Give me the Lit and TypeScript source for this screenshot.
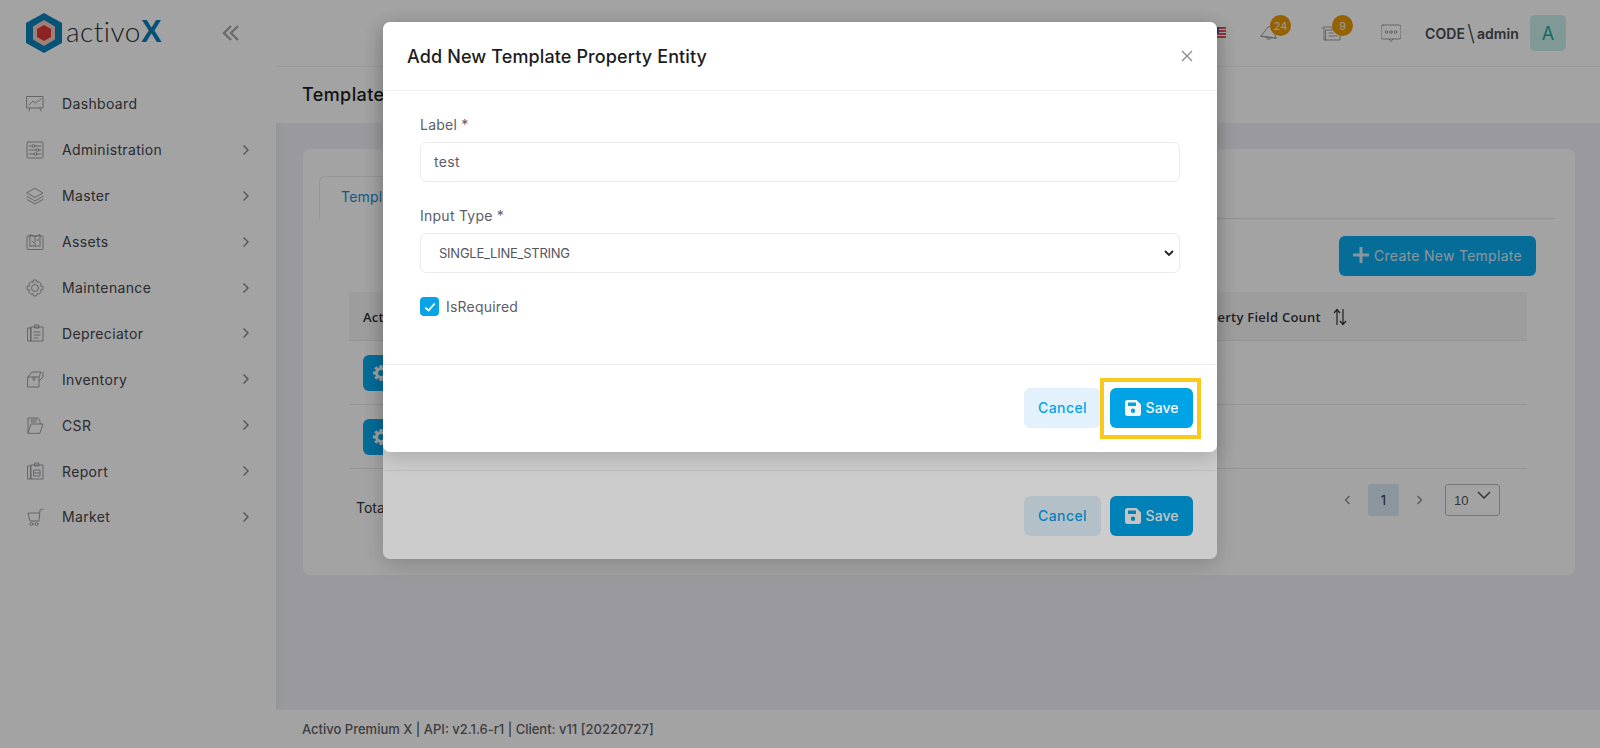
import { LitElement, html, css, svg } from "lit";
import { customElement } from "lit/decorators.js";

const line = (body: unknown, size = 20) => html`<svg class="ico" width=${size} height=${size} viewBox="0 0 20 20" fill="none" stroke="currentColor" stroke-width="0.9" stroke-linejoin="round" stroke-linecap="round">${body}</svg>`;

const MENU = [
  { name: "Dashboard", arrow: false, icon: svg`<rect x="2" y="2.500" width="16" height="11.500"/><path d="M4 11l4-4 2.500 2L16 5M5 14l-1 3M15 14l1 3"/>` },
  { name: "Administration", arrow: true, icon: svg`<rect x="2" y="2" width="16" height="16" rx="1"/><path d="M4 6h3M10 6h6M4 10h7M14 10h2M4 14h5M12 14h4"/><circle cx="8.500" cy="6" r="1.400"/><circle cx="12.500" cy="10" r="1.400"/><circle cx="10.500" cy="14" r="1.400"/>` },
  { name: "Master", arrow: true, icon: svg`<path d="M10 2.500L18 7l-8 4.500L2 7zM2 10.500l8 4.500 8-4.500M2 13.500l8 4.500 8-4.500"/>` },
  { name: "Assets", arrow: true, icon: svg`<rect x="2" y="4" width="16" height="13.500" rx="1"/><path d="M5 14V2.500l5 2 5-2V14M10 4.500V14M5 14h10M7 9l2 2M12 8h2"/>` },
  { name: "Maintenance", arrow: true, icon: svg`<circle cx="10" cy="10" r="3.500"/><path d="M8.500 2h3l.5 2.500 2-.8 2.200 2.100-1 2 2.800.7v3l-2.800.7 1 2-2.200 2.100-2-.8-.5 2.500h-3l-.5-2.500-2 .8-2.200-2.100 1-2L2 11.500v-3l2.800-.7-1-2L6 3.700l2 .8z"/>` },
  { name: "Depreciator", arrow: true, icon: svg`<path d="M3 5h3v13H3zM6 4h12v14H6zM10 2h4v3h-4zM9 9h6M9 12h6M9 15h4"/>` },
  { name: "Inventory", arrow: true, icon: svg`<path d="M3 8h11v10H3zM3 8l4-5h9l-2 5M14 12l4-4V3M8 8v3h2V8"/>` },
  { name: "CSR", arrow: true, icon: svg`<path d="M3 18V3h10l2 3v3M6 5h6M6 7h5M3 18l3-9h12l-3 9z"/>` },
  { name: "Report", arrow: true, icon: svg`<path d="M3 5h3v13H3zM6 4h12v14H6zM10 2h4v3h-4zM9 9h6v6H9zM9 12h6"/>` },
  { name: "Market", arrow: true, icon: svg`<path d="M18 2l-3 1-1 11H5L3 6h11"/><circle cx="6.500" cy="17" r="1.500"/><circle cx="11.500" cy="17" r="1.500"/>` },
];

const saveIcon = html`<svg class="save-ico" width="16" height="16" viewBox="0 0 16 16"><path fill="currentColor" fill-rule="evenodd" d="M2.500 0h9L16 4.500v9a2.500 2.500 0 0 1-2.500 2.500h-11A2.500 2.500 0 0 1 0 13.500v-11A2.500 2.500 0 0 1 2.500 0zM3 2.500v3.500h8V2.500zM8 8.500a2.200 2.200 0 1 0 0 4.400 2.200 2.200 0 0 0 0-4.400z"/></svg>`;

const footerButtons = html`
  <button class="btn cancel">Cancel</button>
  <button class="btn save">${saveIcon}Save</button>
`;

const gear = html`<svg class="gear" width="18" height="18" viewBox="0 0 18 18"><circle cx="9" cy="9" r="4.500" fill="none" stroke="currentColor" stroke-width="3"/><path stroke="currentColor" stroke-width="3" d="M9 1v3M9 14v3M1 9h3M14 9h3M3.300 3.300l2 2M12.700 12.700l2 2M14.700 3.300l-2 2M5.300 12.700l-2 2"/></svg>`;

@customElement("app-root")
export class AppRoot extends LitElement {
  static styles = css`
    :host {
      display: block;
      position: relative;
      width: 1600px;
      height: 748px;
      overflow: hidden;
      font-family: Inter, "Open Sans", sans-serif;
      color: #33333b;
    }
    .shell {
      display: grid;
      grid-template-columns: 276px 1fr;
      height: 748px;
      background: #f0f1f9;
    }
    .sidebar {
      background: #fff;
      box-shadow: 2px 0 8px rgba(0, 0, 0, 0.04);
      padding-top: 13px;
    }
    .logo {
      display: flex;
      align-items: center;
      height: 40px;
      padding: 0 35px 0 26px;
    }
    .logo-text {
      margin: -4px 0 0 4px;
      font-family: Lato, sans-serif;
      font-size: 28px;
      line-height: 32px;
      font-weight: 300;
      letter-spacing: 0.5px;
      color: #33333b;
    }
    .logo-x {
      font-family: "Liberation Sans", sans-serif;
      font-weight: 700;
      font-size: 31px;
      color: #0a7db4;
    }
    .collapse {
      margin-left: auto;
      color: #a9a9ab;
    }
    .menu {
      margin-top: 28px;
    }
    .item {
      display: flex;
      align-items: center;
      height: 45.900px;
      padding-left: 25px;
      font-size: 14px;
      letter-spacing: 0.35px;
      color: #45454c;
    }
    .ico {
      flex: none;
      color: #96969a;
    }
    .item span {
      margin-left: 17px;
      flex: 1;
    }
    .chev {
      margin-right: 26px;
      color: #85858a;
    }
    .main {
      display: flex;
      flex-direction: column;
      min-width: 0;
    }
    .topbar {
      height: 67px;
      flex: none;
      box-sizing: border-box;
      background: #fff;
      border-bottom: 1px solid #f0f0f0;
      display: flex;
      align-items: center;
      justify-content: flex-end;
      padding-right: 34px;
    }
    .flag {
      width: 12px;
      height: 12px;
      margin-right: 33px;
      background:
        linear-gradient(#3c5a9a, #3c5a9a) 0 0 / 5px 6px no-repeat,
        repeating-linear-gradient(#e0565f 0 2px, #fff 2px 3px);
    }
    .notif {
      position: relative;
      display: flex;
      color: #8a8a8e;
    }
    .notif.bell { margin-right: 42px; }
    .notif.docs { margin-right: 40px; }
    .notif.chat { margin-right: 24px; }
    .badge {
      position: absolute;
      top: -8px;
      left: 11px;
      width: 21px;
      height: 21px;
      border-radius: 50%;
      background: #ea9a00;
      color: #f2f2f2;
      font-size: 11px;
      display: flex;
      align-items: center;
      justify-content: center;
    }
    .user {
      display: flex;
      align-items: center;
      font-size: 14px;
      font-weight: 600;
      letter-spacing: 0.1px;
      color: #4a4a55;
      margin-right: 11px;
      white-space: nowrap;
    }
    .slash {
      margin: 0 2px;
      font-size: 22px;
      font-weight: 300;
      line-height: 22px;
    }
    .avatar {
      width: 36px;
      height: 36px;
      border-radius: 5px;
      background: #c9efeb;
      color: #1fa99c;
      font-size: 18px;
      display: flex;
      align-items: center;
      justify-content: center;
    }
    .subbar {
      height: 56px;
      flex: none;
      box-sizing: border-box;
      background: #fff;
      display: flex;
      align-items: center;
      padding: 0 0 2px 26px;
      font-size: 18px;
      font-weight: 500;
      letter-spacing: 0.4px;
      color: #1c1c22;
    }
    .content {
      flex: 1;
      padding: 26px 25px 0 27px;
    }
    .card {
      height: 426px;
      box-sizing: border-box;
      background: #fff;
      border-radius: 7px;
      padding: 27px 20px 0 16px;
      display: flex;
      flex-direction: column;
    }
    .tabs {
      display: flex;
      height: 42px;
      flex: none;
      border-bottom: 1px solid #e4e4e4;
    }
    .tab {
      box-sizing: border-box;
      height: 43px;
      padding: 11px 22px 0 21px;
      border: 1px solid #ececec;
      border-bottom: 0;
      border-radius: 6px 6px 0 0;
      background: #fff;
      font-size: 14px;
      letter-spacing: 0.2px;
      color: #1a8fd0;
    }
    .actions {
      display: flex;
      justify-content: flex-end;
      margin: 17px 19px 16px 0;
    }
    .create {
      width: 197px;
      height: 40px;
      padding: 0 0 2px;
      border: 0;
      border-radius: 6px;
      background: #0aaaef;
      color: #d5edf8;
      font: inherit;
      font-size: 14px;
      letter-spacing: 0.28px;
      display: flex;
      align-items: center;
      justify-content: center;
      gap: 5px;
    }
    .table {
      margin: 0 28px 0 30px;
    }
    .thead {
      height: 49px;
      box-sizing: border-box;
      padding: 1px 180px 0 14px;
      background: #f7f7f7;
      border-bottom: 1px solid #e8e8e8;
      display: flex;
      align-items: center;
      justify-content: space-between;
      font-family: "Open Sans", sans-serif;
      font-size: 13px;
      font-weight: 600;
      letter-spacing: 0.25px;
    }
    .sort-col {
      display: flex;
      align-items: center;
    }
    .sort {
      margin-left: 12px;
    }
    .row {
      height: 64px;
      box-sizing: border-box;
      border-bottom: 1px solid #e8e8e8;
      display: flex;
      align-items: center;
      padding-left: 14px;
    }
    .row-btn {
      width: 36px;
      height: 36px;
      border-radius: 6px;
      background: #0aaaef;
      color: #fff;
      display: flex;
      align-items: center;
      justify-content: center;
    }
    .pager {
      display: flex;
      align-items: center;
      height: 62px;
      margin: 0 55px 0 37px;
      font-size: 14px;
    }
    .total {
      flex: 1;
      padding-top: 14px;
    }
    .page-arrow {
      color: #85858a;
      display: flex;
    }
    .page-one {
      width: 31px;
      height: 32px;
      margin: 0 17px;
      border-radius: 3px;
      background: #dcecf7;
      display: flex;
      align-items: center;
      justify-content: center;
      font-size: 13px;
    }
    .page-size {
      width: 55px;
      height: 32px;
      box-sizing: border-box;
      margin-left: 22px;
      padding: 8px 8px 0 8px;
      border: 1px solid #bdbdbd;
      border-radius: 3px;
      display: flex;
      justify-content: space-between;
      font-family: "Liberation Sans", sans-serif;
      font-size: 13px;
      color: #555;
    }
    .page-size svg {
      margin-top: -2px;
    }
    .footer {
      height: 38px;
      flex: none;
      background: #fff;
      display: flex;
      align-items: center;
      padding-left: 26px;
      font-size: 13px;
      font-weight: 500;
      color: #5f5f68;
    }
    .backdrop {
      position: absolute;
      inset: 0;
      background: rgba(0, 0, 0, 0.2);
    }
    .modal {
      position: absolute;
      left: 383px;
      top: 22px;
      width: 834px;
      box-sizing: border-box;
      background: #fff;
      border-radius: 7px;
      box-shadow: 0 6px 20px rgba(0, 0, 0, 0.16);
      display: flex;
      flex-direction: column;
    }
    .modal.under {
      height: 537px;
      justify-content: flex-end;
    }
    .modal.under .modal-foot {
      height: 89px;
      padding-top: 25px;
    }
    .modal-head {
      height: 69px;
      box-sizing: border-box;
      border-bottom: 1px solid #eeeeee;
      display: flex;
      align-items: center;
      justify-content: space-between;
      padding: 0 23px 0 24px;
      font-size: 18px;
      font-weight: 500;
      letter-spacing: 0.12px;
      color: #1c1c22;
    }
    .close {
      color: #8b8b8b;
      display: flex;
    }
    .modal-body {
      height: 273px;
      box-sizing: border-box;
      padding: 25px 37px 0;
    }
    .field-label {
      display: block;
      height: 18px;
      line-height: 18px;
      font-size: 14px;
      letter-spacing: 0.25px;
      color: #5d5d66;
    }
    .field {
      height: 40px;
      box-sizing: border-box;
      margin: 8px 0 25px;
      padding: 0 13px 2px;
      border: 1px solid #ececec;
      border-radius: 6px;
      display: flex;
      align-items: center;
      justify-content: space-between;
      font-size: 14px;
      letter-spacing: 0.3px;
      color: #5d5d66;
    }
    .field.select {
      padding: 0 3px 0 18px;
      margin-bottom: 24px;
      font-size: 13px;
      letter-spacing: -0.25px;
      color: #55555d;
    }
    .select-arrow {
      color: #222;
      display: flex;
    }
    .check {
      display: flex;
      align-items: center;
      gap: 7px;
      font-size: 14px;
      letter-spacing: 0.2px;
      color: #5d5d66;
    }
    .box {
      width: 19px;
      height: 19px;
      border-radius: 4px;
      background: #0aa3e8;
      color: #fff;
      display: flex;
      align-items: center;
      justify-content: center;
    }
    .modal-foot {
      height: 88px;
      box-sizing: border-box;
      border-top: 1px solid #eeeeee;
      display: flex;
      justify-content: flex-end;
      gap: 9px;
      padding: 23px 24px 0 0;
    }
    .btn {
      height: 40px;
      padding: 0 0 1px;
      border: 0;
      border-radius: 6px;
      font: inherit;
      font-size: 14px;
      font-weight: 500;
      display: flex;
      align-items: center;
      justify-content: center;
      gap: 5px;
    }
    .cancel {
      width: 77px;
      background: #e2f1fb;
      color: #0aa3e8;
      letter-spacing: 0.4px;
    }
    .save {
      width: 83px;
      background: #00a3e6;
      color: #f6f6f6;
    }
    .highlight {
      position: absolute;
      left: 1100px;
      top: 378px;
      width: 101px;
      height: 61px;
      box-sizing: border-box;
      border: 4px solid #fbc91d;
    }
  `;

  render() {
    return html`
      <div class="shell">
        <aside class="sidebar">
          <div class="logo">
            <svg width="36" height="40" viewBox="0 0 36 40">
              <path d="M18 0L36 10v20L18 40 0 30V10z" fill="#0a82bd" />
              <path d="M18 7l11 6.500v13L18 33 7 26.500v-13z" fill="#f7c8be" />
              <path d="M18 12l7 4v8l-7 4-7-4v-8z" fill="#dd3a36" />
            </svg>
            <div class="logo-text">activo<span class="logo-x">X</span></div>
            <svg class="collapse" width="20" height="18" viewBox="0 0 20 18" fill="none" stroke="currentColor" stroke-width="2.400"><path d="M10 2L3 9l7 7M17 2l-7 7 7 7" /></svg>
          </div>
          <nav class="menu">
            ${MENU.map(
              (m) => html`<div class="item">
                ${line(m.icon)}
                <span>${m.name}</span>
                ${m.arrow
                  ? html`<svg class="chev" width="8" height="12" viewBox="0 0 8 12" fill="none" stroke="currentColor" stroke-width="1.400"><path d="M1.500 1.500L6 6l-4.500 4.500" /></svg>`
                  : null}
              </div>`
            )}
          </nav>
        </aside>
        <div class="main">
          <header class="topbar">
            <div class="flag"></div>
            <div class="notif bell">
              ${line(svg`<path d="M2 13l7-9 3-1 3 4 0 3 2 5zM2 13l15 2M7 14.500a3 3 0 0 0 5 1"/>`)}
              <div class="badge">24</div>
            </div>
            <div class="notif docs">
              ${line(svg`<path d="M3 4h8v2M1 5h2v12h2M5 7h14v10H5zM8 10h4M8 13h8"/>`)}
              <div class="badge">9</div>
            </div>
            <div class="notif chat">
              ${line(svg`<rect x="0" y="2" width="20" height="14" rx="2"/><circle cx="5.500" cy="9" r="1.300"/><circle cx="10" cy="9" r="1.300"/><circle cx="14.500" cy="9" r="1.300"/><path d="M8 16l2 2.500 2-2.500"/>`)}
            </div>
            <div class="user">CODE<span class="slash">\\</span>admin</div>
            <div class="avatar">A</div>
          </header>
          <div class="subbar">Templates</div>
          <div class="content">
            <section class="card">
              <div class="tabs"><div class="tab">Templates</div></div>
              <div class="actions">
                <button class="create">
                  <svg width="16" height="16" viewBox="0 0 16 16"><path fill="currentColor" d="M6.500 0h3v6.500H16v3H9.500V16h-3V9.500H0v-3h6.500z" /></svg>
                  Create New Template
                </button>
              </div>
              <div class="table">
                <div class="thead">
                  <span>Actions</span>
                  <span class="sort-col">Property Field Count
                    <svg class="sort" width="14" height="18" viewBox="0 0 14 18" fill="none" stroke="currentColor" stroke-width="1.200"><path d="M4 17V1.500M1 5l3-3.500L7 5M10 1v15.500M7 13l3 3.500 3-3.500" /></svg>
                  </span>
                </div>
                <div class="row"><div class="row-btn">${gear}</div></div>
                <div class="row"><div class="row-btn">${gear}</div></div>
              </div>
              <div class="pager">
                <span class="total">Total 2</span>
                <span class="page-arrow"><svg width="7" height="10" viewBox="0 0 7 10" fill="none" stroke="currentColor" stroke-width="1.200"><path d="M5.500 1L1.500 5l4 4" /></svg></span>
                <div class="page-one">1</div>
                <span class="page-arrow"><svg width="7" height="10" viewBox="0 0 7 10" fill="none" stroke="currentColor" stroke-width="1.200"><path d="M1.500 1l4 4-4 4" /></svg></span>
                <div class="page-size">
                  <span>10</span>
                  <svg width="14" height="8" viewBox="0 0 14 8" fill="none" stroke="currentColor" stroke-width="1.500"><path d="M1 1l6 6 6-6" /></svg>
                </div>
              </div>
            </section>
          </div>
          <footer class="footer">Activo Premium X | API: v2.1.6-r1 | Client: v11 [20220727]</footer>
        </div>
      </div>

      <div class="backdrop"></div>
      <div class="modal under">
        <div class="modal-foot">${footerButtons}</div>
      </div>
      <div class="backdrop"></div>

      <div class="modal">
        <div class="modal-head">
          Add New Template Property Entity
          <span class="close">
            <svg width="14" height="14" viewBox="0 0 14 14" fill="none" stroke="currentColor" stroke-width="1.300"><path d="M2 2l10 10M12 2L2 12" /></svg>
          </span>
        </div>
        <div class="modal-body">
          <label class="field-label">Label *</label>
          <div class="field">test</div>
          <label class="field-label">Input Type *</label>
          <div class="field select">
            SINGLE_LINE_STRING
            <span class="select-arrow">
              <svg width="14" height="14" viewBox="0 0 14 14" fill="none" stroke="currentColor" stroke-width="1.800"><path d="M3 5l4 4 4-4" /></svg>
            </span>
          </div>
          <div class="check">
            <span class="box">
              <svg width="14" height="14" viewBox="0 0 12 12" fill="none" stroke="currentColor" stroke-width="1.600"><path d="M2 6.500l2.800 2.500L10 3" /></svg>
            </span>
            IsRequired
          </div>
        </div>
        <div class="modal-foot">${footerButtons}</div>
      </div>
      <div class="highlight"></div>
    `;
  }
}
